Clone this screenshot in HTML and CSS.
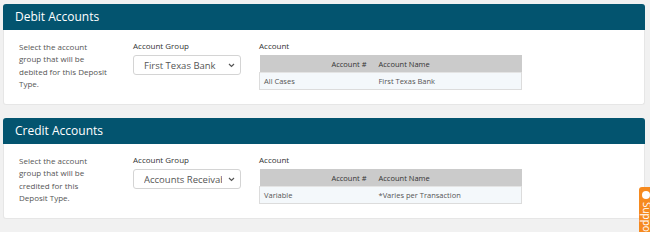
FILE: index.html
```html
<!DOCTYPE html>
<html>
<head>
<meta charset="utf-8">
<link rel="stylesheet" href="styles.css">
</head>
<body>
<section class="card">
  <header class="card-head">Debit Accounts</header>
  <div class="card-body">
    <p class="desc">Select the account group that will be debited for this Deposit Type.</p>
    <div class="field">
      <div class="label">Account Group</div>
      <div class="select"><span class="select-text">First Texas Bank</span>
        <svg class="chev" width="7" height="5" viewBox="0 0 7 5"><path d="M1 1l2.5 2.5L6 1" fill="none" stroke="#555" stroke-width="1.2"/></svg>
      </div>
    </div>
    <div class="field">
      <div class="label">Account</div>
      <table class="acct">
        <thead><tr><th class="num">Account #</th><th class="name">Account Name</th></tr></thead>
        <tbody><tr><td class="num-cell">All Cases</td><td>First Texas Bank</td></tr></tbody>
      </table>
    </div>
  </div>
</section>
<section class="card">
  <header class="card-head">Credit Accounts</header>
  <div class="card-body">
    <p class="desc">Select the account group that will be credited for this Deposit Type.</p>
    <div class="field">
      <div class="label">Account Group</div>
      <div class="select"><span class="select-text">Accounts Receivable</span>
        <svg class="chev" width="7" height="5" viewBox="0 0 7 5"><path d="M1 1l2.5 2.5L6 1" fill="none" stroke="#555" stroke-width="1.2"/></svg>
      </div>
    </div>
    <div class="field">
      <div class="label">Account</div>
      <table class="acct">
        <thead><tr><th class="num">Account #</th><th class="name">Account Name</th></tr></thead>
        <tbody><tr><td class="num-cell">Variable</td><td>*Varies per Transaction</td></tr></tbody>
      </table>
    </div>
  </div>
</section>
<div class="support"><span class="support-icon"></span><span class="support-text">Support</span></div>
</body>
</html>
```
FILE: styles.css
```css
html, body { height: 100%; }
body {
  margin: 0;
  padding: 4px 5px 0 3px;
  background: #f1f1f1;
  font-family: "Open Sans", "DejaVu Sans", sans-serif;
  overflow: hidden;
}
.card {
  background: #fff;
  border: 1px solid #e6e6e6;
  border-top: 0;
  border-radius: 3px;
  margin-bottom: 13px;
  height: 101px;
  box-sizing: border-box;
}
.card-head {
  background: #03546f;
  color: #fff;
  height: 26px;
  line-height: 26px;
  padding-left: 12px;
  font-size: 12px;
  border-radius: 3px 3px 0 0;
  margin: 0 -1px;
}
.card-body {
  display: grid;
  grid-template-columns: 114px 126px 262px;
  padding: 11px 0 0 15px;
}
.desc {
  margin: 0;
  font-size: 8px;
  line-height: 12.3px;
  color: #555;
  width: 89px;
}
.label {
  font-size: 8px;
  color: #333;
  line-height: 10px;
  margin-top: 0;
  margin-bottom: 4px;
}
.select {
  width: 108px;
  height: 20px;
  box-sizing: border-box;
  border: 1px solid #d4d4d4;
  border-radius: 3px;
  display: flex;
  align-items: center;
  padding: 0 5px 0 10px;
  gap: 6px;
}
.select-text {
  flex: 1;
  overflow: hidden;
  white-space: nowrap;
  font-size: 9.5px;
  color: #555;
}
.chev { flex: none; }
.acct {
  width: 263px;
  border-collapse: collapse;
  font-size: 7.5px;
}
.acct th {
  background: #cbcbcb;
  color: #333;
  font-weight: normal;
  height: 17px;
  padding: 0;
  text-align: left;
}
.acct th.num { text-align: right; padding-right: 12px; width: 107px; }
.acct th.name { padding-left: 0; }
.acct td {
  background: #f4f8fb;
  border-top: 1px solid #e4e4e4;
  border-bottom: 1px solid #dcdcdc;
  color: #555;
  height: 16px;
  padding: 0;
}
.acct td.num-cell { padding-left: 4px; border-left: 1px solid #dcdcdc; }
.acct td:last-child { border-right: 1px solid #dcdcdc; }
.support {
  position: fixed;
  right: 0;
  bottom: 0;
  width: 11px;
  height: 45px;
  background: #f68a1f;
  border-radius: 3px 0 0 0;
  display: flex;
  flex-direction: column;
  align-items: flex-start;
  padding: 4px 0 0 2px;
  box-sizing: border-box;
  overflow: hidden;
}
.support-icon {
  width: 8px;
  height: 8px;
  border-radius: 50%;
  background: #fff;
  flex: none;
  margin-left: 1px;
}
.support-text {
  writing-mode: vertical-rl;
  color: #fff;
  font-size: 10px;
  margin-top: 3px;
  margin-left: -1px;
}
```
